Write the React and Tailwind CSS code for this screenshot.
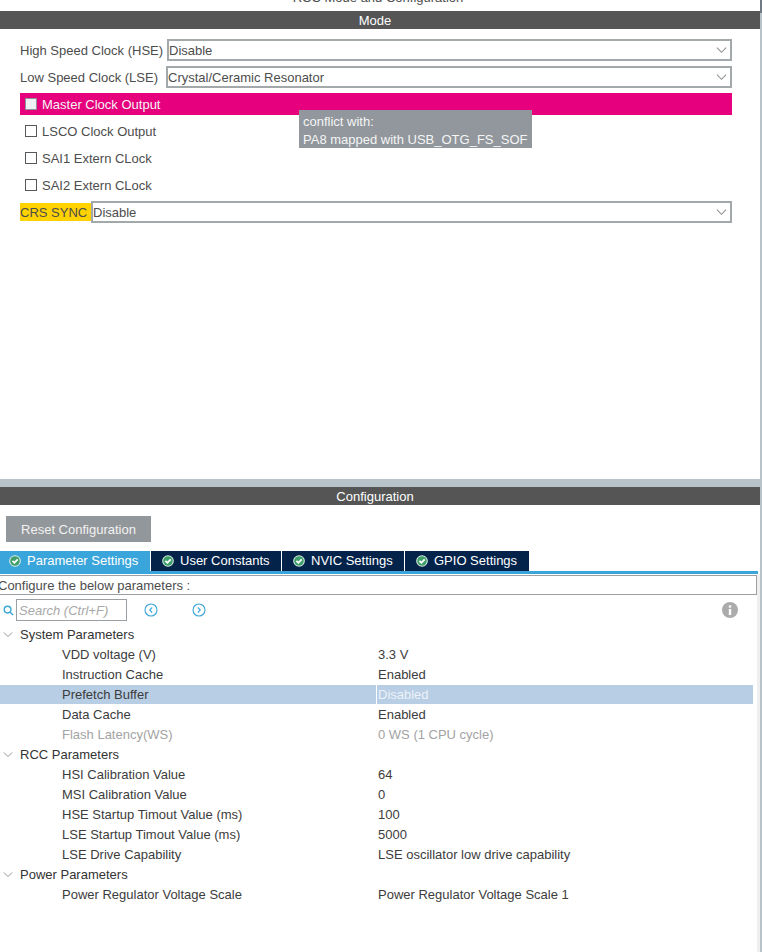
// RCC mode and configuration panel
const FONT = "font-['Liberation_Sans',Arial,sans-serif]"

function Chevron({ className }) {
  return (
    <svg viewBox="0 0 12 8" className={className} fill="none" stroke="currentColor" strokeWidth="1.1">
      <path d="M1 1.5 L6 6.5 L11 1.5" />
    </svg>
  )
}

function Select({ value }) {
  return (
    <div className="flex h-[22px] flex-1 items-center justify-between border-2 border-[#a3a8ab] pr-[3px] text-[#4d4d4d]">
      <span>{value}</span>
      <Chevron className="h-[8px] w-[11px] text-[#8a8f93]" />
    </div>
  )
}

function CheckRow({ label }) {
  return (
    <div className="mt-[5px] flex h-[22px] items-center pl-[5px] text-[#4d4d4d]">
      <span className="h-[12px] w-[12px] border border-[#55595c]" />
      <span className="ml-[5px]">{label}</span>
    </div>
  )
}

function CheckIcon() {
  return (
    <svg viewBox="0 0 12 12" className="h-[12px] w-[12px] shrink-0">
      <circle cx="6" cy="6" r="5.8" fill="#dff0e7" />
      <circle cx="6" cy="6" r="4.8" fill="#3f9f6a" />
      <path d="M3.4 5.8 L5.4 7.8 L8.7 4.3" fill="none" stroke="#fff" strokeWidth="1.8" />
    </svg>
  )
}

function Tab({ label, active, className }) {
  return (
    <div className={`flex h-[20px] items-center gap-[6px] pb-[1px] text-white ${active ? 'bg-[#3aa5da]' : 'bg-[#03234b]'} ${className}`}>
      <CheckIcon />
      <span>{label}</span>
    </div>
  )
}

function NavArrow({ left }) {
  return (
    <svg viewBox="0 0 14 14" className="h-[14px] w-[14px] text-[#3aa5da]" fill="none" stroke="currentColor">
      <circle cx="7" cy="7" r="6" strokeWidth="1.1" />
      <path d={left ? 'M8.2 4.5 L5.7 7 L8.2 9.5' : 'M5.8 4.5 L8.3 7 L5.8 9.5'} strokeWidth="1.1" />
    </svg>
  )
}

function Group({ label }) {
  return (
    <div className="flex h-[20px] items-center text-[#333]">
      <Chevron className="ml-[3px] h-[7px] w-[10px] text-[#8a8f93]" />
      <span className="ml-[7px]">{label}</span>
    </div>
  )
}

function Param({ label, value, selected, muted }) {
  return (
    <div className={`flex h-[20px] w-[753px] items-center ${selected ? 'border-t border-white bg-[#b8cee4]' : ''}`}>
      <span className={`w-[376px] pl-[62px] ${muted ? 'text-[#a3a3a3]' : 'text-[#3c3c3c]'}`}>{label}</span>
      <span className={`flex h-full items-center pl-[1px] ${selected ? 'border-l border-white text-[#edf2f8]' : 'border-l border-transparent'} ${muted ? 'text-[#a3a3a3]' : ''} ${!selected && !muted ? 'text-[#3c3c3c]' : ''}`}>
        {value}
      </span>
    </div>
  )
}

function App() {
  return (
    <div className={`relative flex h-[952px] w-[762px] overflow-hidden bg-white text-[13px] leading-[15px] ${FONT}`}>
      <div className="w-[760px] shrink-0">
        {/* Mode */}
        <div className="flex h-[11px] justify-center overflow-hidden pr-[4px]">
          <span className="relative -top-[10px] text-[#4d4d4d]">RCC Mode and Configuration</span>
        </div>
        <div className="flex h-[18px] items-center justify-center bg-[#545554] pr-[10px] text-white">Mode</div>
        <div className="relative h-[450px] pl-[20px] pr-[28px] pt-[10px]">
          <div className="flex items-center text-[#4d4d4d]">
            <span className="w-[147px]">High Speed Clock (HSE)</span>
            <Select value="Disable" />
          </div>
          <div className="mt-[5px] flex items-center text-[#4d4d4d]">
            <span className="w-[146px]">Low Speed Clock (LSE)</span>
            <Select value="Crystal/Ceramic Resonator" />
          </div>
          <div className="mt-[5px] flex h-[22px] items-center bg-[#e6007e] pl-[5px] text-[#f4f4f4]">
            <span className="h-[12px] w-[12px] border border-[#8f9397] bg-[#eef0f3]" />
            <span className="ml-[5px]">Master Clock Output</span>
          </div>
          <CheckRow label="LSCO Clock Output" />
          <CheckRow label="SAI1 Extern CLock" />
          <CheckRow label="SAI2 Extern CLock" />
          <div className="mt-[5px] flex items-center text-[#4d4d4d]">
            <span className="flex h-[18px] w-[71px] items-center bg-[#ffd200]">CRS SYNC</span>
            <Select value="Disable" />
          </div>
          <div className="absolute left-[299px] top-[81px] h-[38px] w-[233px] bg-[#91979c] pl-[4px] pt-[3px] leading-[18px] text-[#f5f5f5]">
            <div>conflict with:</div>
            <div>PA8 mapped with USB_OTG_FS_SOF</div>
          </div>
        </div>

        {/* Configuration */}
        <div className="h-[8px] bg-[#b8c3c9]" />
        <div className="flex h-[18px] items-center justify-center bg-[#545554] pr-[10px] text-white">Configuration</div>
        <div className="pl-[6px] pt-[11px]">
          <div className="flex h-[26px] w-[145px] items-center justify-center bg-[#92979b] text-[#f2f2f2]">Reset Configuration</div>
        </div>
        <div className="mt-[9px] flex gap-[1px]">
          <Tab active label="Parameter Settings" className="w-[150px] pl-[9px]" />
          <Tab label="User Constants" className="w-[130px] pl-[11px]" />
          <Tab label="NVIC Settings" className="w-[122px] pl-[11px]" />
          <Tab label="GPIO Settings" className="w-[124px] pl-[11px]" />
        </div>
        <div className="h-[3px] w-[758px] bg-[#3aa5da]" />
        <div className="-ml-[2px] mt-[1px] flex h-[20px] w-[759px] items-center border border-[#9a9fa3] text-[#4d4d4d]">
          <span className="-ml-[1px] whitespace-nowrap">Configure the below parameters :</span>
        </div>
        <div className="relative mt-[4px] flex h-[22px] items-center">
          <svg viewBox="0 0 12 12" className="ml-[3px] h-[11px] w-[11px] text-[#3aa5da]" fill="none" stroke="currentColor" strokeWidth="1.5">
            <circle cx="5" cy="5" r="3.7" />
            <path d="M7.8 7.8 L11 11" />
          </svg>
          <div className="ml-[2px] flex h-[22px] w-[111px] items-center border border-[#9a9fa3] pl-[2px] italic text-[#a8a8a8]">Search (Ctrl+F)</div>
          <div className="ml-[17px]"><NavArrow left /></div>
          <div className="ml-[34px]"><NavArrow /></div>
          <svg viewBox="0 0 16 16" className="absolute left-[722px] top-[3px] h-[16px] w-[16px]">
            <circle cx="8" cy="8" r="8" fill="#ababab" />
            <rect x="6.8" y="7" width="2.4" height="6" fill="#fff" />
            <rect x="6.8" y="3.4" width="2.4" height="2.2" fill="#fff" />
          </svg>
        </div>
        <div className="mt-[3px]">
          <Group label="System Parameters" />
          <Param label="VDD voltage (V)" value="3.3 V" />
          <Param label="Instruction Cache" value="Enabled" />
          <Param selected label="Prefetch Buffer" value="Disabled" />
          <Param label="Data Cache" value="Enabled" />
          <Param muted label="Flash Latency(WS)" value="0 WS (1 CPU cycle)" />
          <Group label="RCC Parameters" />
          <Param label="HSI Calibration Value" value="64" />
          <Param label="MSI Calibration Value" value="0" />
          <Param label="HSE Startup Timout Value (ms)" value="100" />
          <Param label="LSE Startup Timout Value (ms)" value="5000" />
          <Param label="LSE Drive Capability" value="LSE oscillator low drive capability" />
          <Group label="Power Parameters" />
          <Param label="Power Regulator Voltage Scale" value="Power Regulator Voltage Scale 1" />
        </div>
      </div>
      {/* scrollbars */}
      <div className="absolute bottom-0 left-[757px] top-[574px] w-[3px] bg-[#efefef]" />
      <div className="w-[2px] bg-[#b8c3c9]">
        <div className="h-[13px] bg-[#6f7a84]" />
      </div>
    </div>
  )
}

export default App
